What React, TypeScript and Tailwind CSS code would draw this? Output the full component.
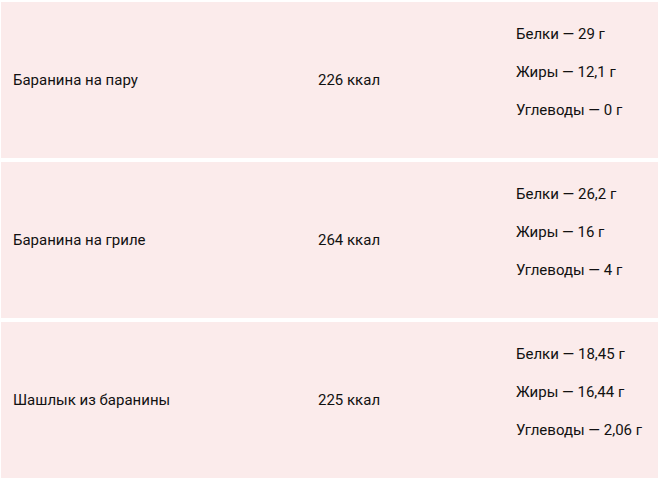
import React from 'react';

const rows = [
  {
    name: 'Баранина на пару',
    kcal: '226 ккал',
    macros: ['Белки — 29 г', 'Жиры — 12,1 г', 'Углеводы — 0 г'],
  },
  {
    name: 'Баранина на гриле',
    kcal: '264 ккал',
    macros: ['Белки — 26,2 г', 'Жиры — 16 г', 'Углеводы — 4 г'],
  },
  {
    name: 'Шашлык из баранины',
    kcal: '225 ккал',
    macros: ['Белки — 18,45 г', 'Жиры — 16,44 г', 'Углеводы — 2,06 г'],
  },
];

const App = () => {
  return (
    <div
      className="w-[659px] h-[479px] overflow-hidden bg-white pt-[2px] px-[1px] text-[15px] text-[#111]"
      style={{ fontFamily: 'Roboto, "Liberation Sans", sans-serif' }}
    >
      <div className="flex flex-col gap-[4px]">
        {rows.map((row) => (
          <div key={row.name} className="flex items-center h-[156px] bg-[#fbebeb]">
            <div className="w-[305px] pl-3">{row.name}</div>
            <div className="w-[198px] pl-3">{row.kcal}</div>
            <div className="flex-1 pl-3 pb-4 flex flex-col gap-[16px]">
              {row.macros.map((m) => (
                <p key={m} className="leading-[22px]">{m}</p>
              ))}
            </div>
          </div>
        ))}
      </div>
    </div>
  );
};

export default App;
